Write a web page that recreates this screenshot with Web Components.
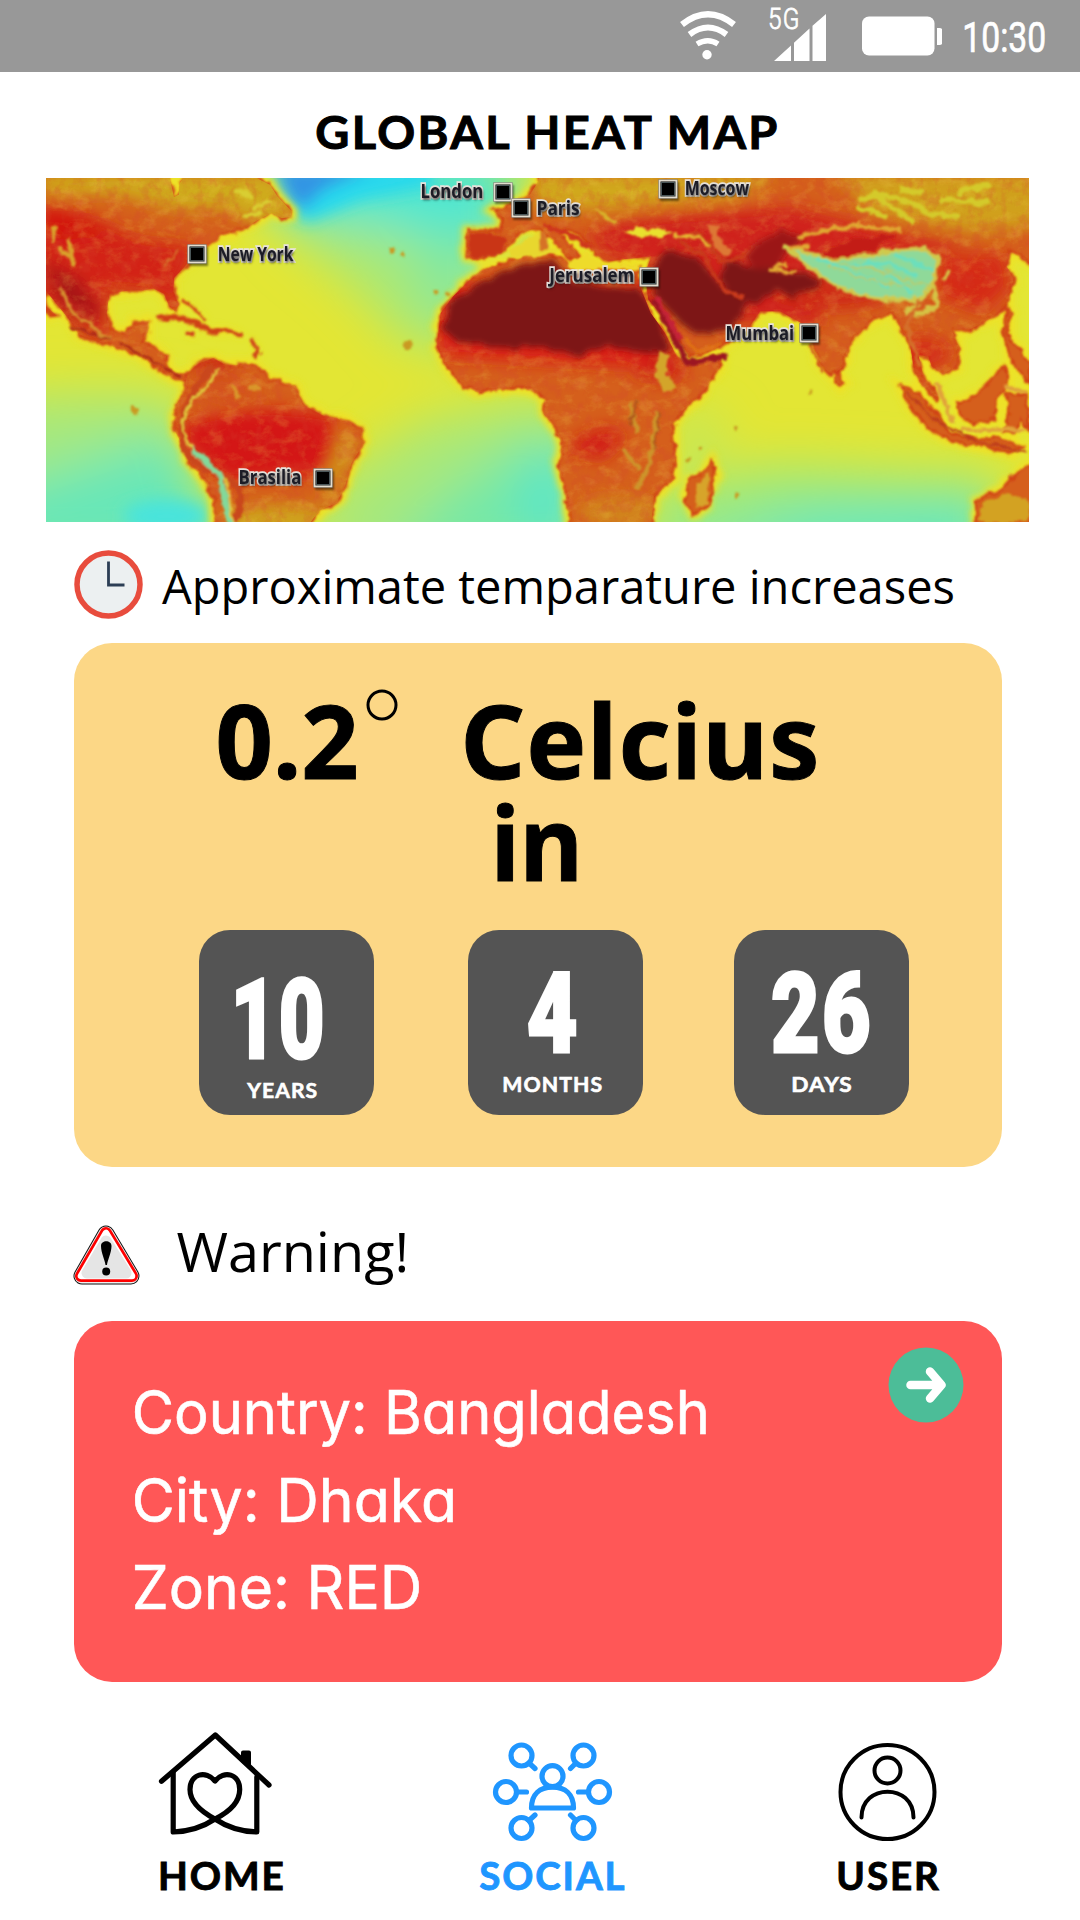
<!DOCTYPE html>
<html lang="en">
<head>
<meta charset="utf-8">
<title>Global Heat Map</title>
<style>
html,body{margin:0;padding:0;background:#fff}
body{width:1080px;height:1920px;overflow:hidden;font-family:Lato,sans-serif;color:#000}
</style>
</head>
<body>
<heat-app></heat-app>
<script>
const define = (name, html, after) => {
  const t = document.createElement('template');
  t.innerHTML = html;
  customElements.define(name, class extends HTMLElement {
    connectedCallback() {
      if (this.shadowRoot) return;
      this.attachShadow({mode: 'open'}).appendChild(t.content.cloneNode(true));
      if (after) after(this, this.shadowRoot);
    }
  });
};

/* Text fitted to a box: w is the ink width, h the capital height; the baseline is the bottom edge. */
const ctx = document.createElement('canvas').getContext('2d');
define('fit-text', `<style>
:host{display:block;flex:none;white-space:nowrap}
span{display:inline-block;transform-origin:0 0;white-space:pre}
div{height:100%;width:100%}
</style><div><span><slot></slot></span></div>`, (el, root) => {
  const w = +el.getAttribute('w'), h = +el.getAttribute('h');
  const fam = el.getAttribute('face') || 'Lato', wt = el.getAttribute('wt') || '800';
  const ls = +(el.getAttribute('ls') || 0);
  const s = root.querySelector('span');
  ctx.font = `${wt} 200px ${fam}, sans-serif`;
  const size = h / (ctx.measureText('H').actualBoundingBoxAscent / 200);
  el.style.width = w + 'px'; el.style.height = h + 'px';
  s.style.font = `${wt} ${size}px/${h}px ${fam}, sans-serif`;
  s.style.letterSpacing = ls * size + 'px';
  if (el.getAttribute('feat')) s.style.fontFeatureSettings = el.getAttribute('feat').split(' ').map(f => `"${f}"`).join(',');
  const m = ctx.measureText(el.textContent), k = size / 200;
  const left = -m.actualBoundingBoxLeft * k, right = (m.width - m.actualBoundingBoxRight) * k;
  const ink = s.getBoundingClientRect().width - left - right - ls * size;
  const sx = w / ink;
  const base = h / 2 + (m.fontBoundingBoxAscent - m.fontBoundingBoxDescent) * k / 2;
  s.style.transform = `translate(${-left * sx}px,${h - base}px) scaleX(${sx})`;
});

define('status-bar', `<style>
:host{display:flex;align-items:flex-start;height:72px;background:#989898;color:#fff;padding-left:680px;box-sizing:border-box}
svg{display:block;flex:none}
.sig{display:flex;margin:9px 0 0 33.500px}
.g5{-webkit-text-stroke:.8px #fff}
.bars{margin:5px 0 0 -23px}
.bat{margin:16px 0 0 35.500px}
.time{margin:21px 0 0 23.500px;-webkit-text-stroke:.7px #fff}
</style>
<svg width="56" height="62" viewBox="0 0 56 62" fill="none" stroke="#fff"><path d="M2 24.500Q28 4 54 24.500" stroke-width="6.200"/><path d="M9.500 34.500Q28 20.500 46.500 34.500" stroke-width="6"/><path d="M17 44Q28 37.500 38 44" stroke-width="5.500"/><circle cx="27" cy="54.800" r="4.700" fill="#fff" stroke="none"/></svg>
<div class="sig"><fit-text class="g5" w="27.500" h="21" face="Roboto" wt="300" ls=".05">5G</fit-text>
<svg class="bars" width="52" height="48" viewBox="0 0 52 48" fill="#fff"><path d="M0 47L17 31.500V47ZM20 47V28.700L35.500 14.500V47ZM38.500 47V11.800L52 0V47Z"/></svg></div>
<svg class="bat" width="80" height="40" viewBox="0 0 80 40" fill="#fff"><rect x="0" y="0.500" width="72.500" height="39" rx="7"/><path d="M75 12h2.500q3 0 3 3v11q0 3-3 3H75Z"/></svg>
<fit-text class="time" w="79.500" h="31" face="Roboto" wt="400">10:30</fit-text>`);

define('map-pin', `<style>
:host{display:block;position:absolute;color:#1c1c26}
i{position:absolute;box-sizing:border-box;width:19px;height:19px;border:2px solid #e2dccf;background:#000;box-shadow:inset 0 0 0 1.500px #4a5658,1px 2px 2px #0007;transform:translate(-9.500px,-9.500px)}
.label{position:absolute;-webkit-text-stroke:3.500px #e8e3dc;paint-order:stroke fill;text-shadow:1px 2px 3px #000a}
</style><i></i>`, (el, root) => {
  const [x, y, tx, ty, w] = el.getAttribute('at').split(',').map(Number);
  el.style.left = x + 'px'; el.style.top = y + 'px';
  const f = document.createElement('fit-text');
  f.className = 'label';
  f.setAttribute('w', w); f.setAttribute('h', 14.5); f.setAttribute('face', "'Open Sans'"); f.setAttribute('wt', '700');
  f.textContent = el.getAttribute('name');
  f.style.left = (tx - x) + 'px'; f.style.top = (ty - 15 - y) + 'px';
  root.appendChild(f);
});

define('heat-map', `<style>
:host{display:block;position:relative;width:983px;height:344px;margin:29px 0 0 46px}
svg{display:block;overflow:hidden}
</style>
<svg width="983" height="344" viewBox="18 235 2949 1032" preserveAspectRatio="none">
<defs>
<filter id="b80" x="-60%" y="-60%" width="220%" height="220%"><feGaussianBlur stdDeviation="75"/></filter>
<filter id="b30" x="-40%" y="-40%" width="180%" height="180%"><feGaussianBlur stdDeviation="24"/></filter>
<filter id="b12" x="-40%" y="-40%" width="180%" height="180%"><feTurbulence type="fractalNoise" baseFrequency=".03" numOctaves="3" result="n"/><feDisplacementMap in="SourceGraphic" in2="n" scale="30"/><feGaussianBlur stdDeviation="9"/></filter>
<filter id="r" x="-5%" y="-5%" width="110%" height="110%"><feTurbulence type="fractalNoise" baseFrequency=".035" numOctaves="3" seed="4" result="n"/><feDisplacementMap in="SourceGraphic" in2="n" scale="24" xChannelSelector="R" yChannelSelector="G"/><feGaussianBlur stdDeviation="3"/></filter>
<filter id="tx" x="0" y="0" width="100%" height="100%"><feTurbulence type="fractalNoise" baseFrequency=".02 .03" numOctaves="5" seed="9"/><feColorMatrix values="0 0 0 0 .86  0 0 0 0 .68  0 0 0 0 .08  3.200 0 0 0 -1.500"/></filter>
<filter id="td" x="0" y="0" width="100%" height="100%"><feTurbulence type="fractalNoise" baseFrequency=".03 .025" numOctaves="4" seed="21"/><feColorMatrix values="0 0 0 0 .66  0 0 0 0 .06  0 0 0 0 .03  0 3.400 0 0 -1.500"/></filter>
<path id="na" d="M0 220H385L395 262 402 292 416 285 420 250 440 220 650 235 690 255 712 290 755 335 752 352 725 356 695 340 655 360 610 388 545 405 515 430 460 472 430 505 402 535 400 575 416 615 405 634 388 620 372 582 340 566 310 572 270 572 208 582 200 640 212 690 255 698 285 665 330 662 322 700 300 728 345 742 378 770 382 806 410 822 445 828 450 842 400 838 350 805 290 762 220 740 120 710 84 655 40 600 18 575V620L50 648 30 650 0 620Z"/>
<path id="sa" d="M438 825L475 792 520 775 560 798 640 793 690 838 765 860 788 915 850 948 920 963 965 990 972 1030 935 1090 915 1160 890 1210 840 1230 795 1290H530L522 1200 500 1150 450 1090 424 1030 400 985 408 920 436 875Z"/>
<path id="af" d="M-185 545L-230 590-268 640-280 740-252 800-212 848-160 878-70 868-20 865 22 880 45 900 42 940 75 985 98 1040 85 1100 105 1170 122 1290H362L372 1190 432 1140 436 1060 425 985 460 930 520 880 572 795 574 770 480 790 440 770 405 700 362 640 330 560 325 500 240 510 170 500 122 512 105 480 60 465 -10 470 -70 487-140 510Z"/>
<path id="eu" d="M-188 392L-95 393-75 355-112 335-40 308 0 285 25 245 30 220H1520V500L1440 455 1430 500 1450 540 1430 620 1385 655 1318 690 1265 690 1290 750 1280 800 1240 822 1205 800 1195 770 1165 765 1180 830 1225 882 1218 900 1170 850 1150 800 1140 730 1115 690 1085 638 1040 655 965 720 940 800 905 830 875 800 850 735 810 668 750 635 690 635 650 695 580 735 480 775 462 745 410 660 355 600 345 520 365 470 290 478 235 485 205 470 185 440 120 390 90 400 150 470 120 480 60 410 10 385-30 400-75 450-150 478-190 470Z"/>
<g id="isl"><path d="M1110 860L1150 870 1210 930 1262 1000 1340 1018 1400 1012 1480 1040 1440 1060 1350 1040 1260 1025 1190 980 1140 920Z"/><path d="M1283 905L1320 900 1380 845 1420 800 1440 840 1400 900 1395 960 1330 972 1290 950Z"/><path d="M1425 880L1490 885 1500 990 1470 960 1450 1000 1420 1000 1440 940Z"/><path d="M1430 620L1445 640 1430 700 1500 790 1500 850 1440 780 1420 700Z"/><path d="M1335 1290L1342 1200 1420 1165 1460 1120 1510 1090V1290Z"/><path d="M545 1078L557 1120 530 1225 490 1245 466 1195 478 1140 515 1120Z"/><path d="M922 815L945 850 930 862 915 842Z"/></g>
<g id="carib" fill="none"><path d="M350 658Q400 640 450 665T505 690" stroke-width="16"/><path d="M440 703H460M500 696L560 692 605 706" stroke-width="14"/><path d="M425 600L460 625 500 662M635 715L652 745 640 775M665 765V770" stroke-width="10"/></g>
<clipPath id="land"><use href="#na"/><use href="#sa"/><use href="#af" x="1470"/><use href="#eu" x="1470"/></clipPath>
</defs>
<rect x="0" y="200" width="3000" height="1100" fill="#e3e634"/>
<g filter="url(#b80)">
<path d="M-200 900Q300 860 420 900L560 1400H-200Z" fill="#a6e87e"/><path d="M-200 1200L400 1000 600 1400H-200Z" fill="#68e7b8"/>
<path d="M600 200H1400V700Q1250 780 1080 720Q1000 600 780 430Z" fill="#a6e87a"/><path d="M680 150H1420V440L1180 420 1000 370 700 350Z" fill="#4be6d4"/>
<path d="M1130 400L1380 380 1280 560 1190 680Z" fill="#7be8a4"/>
<path d="M780 1400L860 1150 1150 960 1500 890 1700 1000V1400Z" fill="#a9e879"/><path d="M980 1400L1250 1160 1500 1000 1650 1050V1400Z" fill="#73e8a9"/><ellipse cx="1520" cy="1200" rx="50" ry="130" fill="#40e4da"/>
<path d="M1820 1400V1180L2200 1100 2880 1130V1400Z" fill="#99e984"/><path d="M1850 1400L2300 1240 2850 1210V1400Z" fill="#5de7c2"/><ellipse cx="1970" cy="1010" rx="80" ry="60" fill="#b0e870"/>
</g>
<g filter="url(#b30)"><ellipse cx="380" cy="1250" rx="130" ry="50" fill="#49e4dc"/><path d="M700 200H1180V260L960 300 800 370 760 330Z" fill="#25d8ee"/><path d="M700 200H1010L850 270 790 330 750 300Z" fill="#3094e4"/></g>
<g filter="url(#b12)" fill="#eee128" stroke="#eee128" stroke-width="32"><use href="#na"/><use href="#sa"/><use href="#af" x="1470"/><use href="#eu" x="1470"/><use href="#isl" x="1470"/><use href="#carib"/></g>
<g filter="url(#r)" fill="#d55f1b" stroke="#cf3f17" stroke-width="7"><use href="#na"/><use href="#sa"/><use href="#af" x="1470"/><use href="#eu" x="1470"/><use href="#isl" x="1470"/><use href="#carib"/></g>
<g clip-path="url(#land)">
<g filter="url(#b30)">
<path d="M0 220H700L780 350 640 370 560 330 400 330 250 290 0 280Z" fill="#cfab1c"/>
<path d="M0 310L130 340 300 420 470 440 430 520 400 640 350 570 200 560 190 720 100 660 0 600Z" fill="#d32016"/><path d="M0 480L120 540 190 640 150 670 60 610Z" fill="#a71614"/><path d="M0 320L130 350 200 410 60 420Z" fill="#d3150f"/>
<path d="M430 975Q620 900 870 950L890 1050 830 1130 560 1140 440 1040Z" fill="#d41814"/><ellipse cx="560" cy="870" rx="90" ry="45" fill="#d4551a"/><ellipse cx="720" cy="1265" rx="180" ry="50" fill="#cfa31c"/><path d="M900 1000L960 1030 880 1210 840 1180Z" fill="#d0921c"/><ellipse cx="520" cy="795" rx="60" ry="22" fill="#c91a17"/>
<path d="M1480 220H2220L2100 290 1700 330 1480 330Z" fill="#d0a81c"/><path d="M2380 220H3000V380L2800 400 2500 340Z" fill="#d0a01c"/>
<path d="M1640 400L1750 360 2000 340 2250 320 2450 370 2600 410 2800 430 2640 470 2350 460 2340 680 2050 660 1850 500 1700 470Z" fill="#d0241a"/>
<path d="M2700 470L2890 460 2910 560 2830 640 2690 590Z" fill="#d52c18"/><path d="M1180 560L1850 560 1910 810 1200 770Z" fill="#d81a14"/><path d="M1850 740L1940 800 1900 850 1780 830Z" fill="#d02018"/><path d="M1600 1020L1700 980 1760 1010 1690 1080 1600 1060Z" fill="#d21d16"/><ellipse cx="1740" cy="1240" rx="130" ry="50" fill="#d1841c"/><ellipse cx="2370" cy="580" rx="180" ry="50" fill="#cf2c18"/><ellipse cx="2640" cy="760" rx="90" ry="50" fill="#d42f18"/>
</g>
<rect x="0" y="220" width="3000" height="1060" filter="url(#tx)" opacity=".2"/>
<rect x="0" y="220" width="3000" height="1060" filter="url(#td)" opacity=".24"/>
<g filter="url(#b12)" fill="#7d1518">
<path d="M1300 555L1440 495 1540 478 1600 550 1800 570 1860 660 1885 745 1830 765 1700 735 1620 770 1500 745 1390 745 1250 725 1208 690 1225 620Z"/><path d="M1835 500L1875 455 1970 472 2045 560 2125 620 2085 680 1980 710 1920 670 1845 590Z"/>
<path d="M2050 480L2170 510 2300 520 2355 550 2260 600 2210 570 2150 610 2090 605 2040 540Z"/><path d="M2110 470L2150 430 2230 390 2300 420 2230 470 2220 510 2150 510Z" fill="#9b1416"/></g>
</g>
<g filter="url(#r)" fill="none">
<path d="M520 800Q440 880 425 980T530 1120 570 1290" stroke="#c9461c" stroke-width="20"/><path d="M535 810L500 860 455 905 425 975 450 1035 510 1100 560 1140 580 1290" stroke="#dfc63c" stroke-width="9"/><path d="M460 1050L540 1125 570 1290" stroke="#83d99a" stroke-width="18"/>
<path d="M60 565L100 640 210 720" stroke="#d58f2d" stroke-width="11"/><path d="M90 680L210 720M245 730L420 830" stroke="#a82819" stroke-width="7"/>
<path d="M45 380L40 430M85 420L100 500M60 450L90 470" stroke="#d9a32c" stroke-width="12"/><path d="M370 500L420 450" stroke="#d5702a" stroke-width="7"/>
<path d="M640 330L690 300M610 350L660 340M580 270L640 290" stroke="#d9ce30" stroke-width="13"/>
<path d="M575 855L600 900M625 860L660 865" stroke="#d9962c" stroke-width="11"/>
<path d="M1840 600L1885 680 1915 735 1940 790 2060 770" stroke="#9b1823" stroke-width="18"/><path d="M1850 590L1895 675 1920 720" stroke="#c42439" stroke-width="12"/>
<path d="M1935 715L1975 755 2040 735" stroke="#e07218" stroke-width="9"/>
<path d="M1875 760L1860 820 1890 870" stroke="#d3a52b" stroke-width="32"/><path d="M1770 910L1790 1000M1850 930L1830 1090 1790 1170M1750 1050L1800 1110" stroke="#cd942b" stroke-width="14"/><path d="M1790 900L1770 980M1860 930L1840 1050" stroke="#af551c" stroke-width="6"/>
<path d="M1920 425L1990 470 2060 580 2110 590M1965 400L2010 430 2040 485 2120 470" stroke="#c93b1a" stroke-width="11"/>
<path d="M1900 405L1970 410 2005 440" stroke="#e5b833" stroke-width="10"/>
<path d="M1510 375L1580 400 1660 450" stroke="#ce341a" stroke-width="15"/><path d="M1670 330L1725 365" stroke="#d8b52b" stroke-width="11"/>
</g>
<g filter="url(#r)">
<path d="M1410 450L1500 395 1500 450 1560 440 1540 465 1410 475Z" fill="#e8d72d"/><path d="M1580 495L1640 455 1690 495 1790 490 1800 510 1590 512Z" fill="#eedb2b"/><path d="M1510 400V450" stroke="#d67227" stroke-width="18"/>
<path d="M1755 405L1785 375 1820 395 1860 385 1895 400 1870 412Z" fill="#e9e12f"/><path d="M2000 375L2040 378 2030 410 2080 455 2050 470 2020 435Z" fill="#dd7834"/>
<path d="M1290 400L1360 400 1400 425 1380 460 1310 475 1285 450Z" fill="#c93518"/>
<path d="M2230 440L2320 465 2380 480 2480 470 2570 450 2650 445 2695 480 2680 550 2640 600 2550 600 2450 585 2370 550Z" fill="#8fd999" stroke="#d0c94c" stroke-width="12"/>
<path d="M2330 475L2460 530 2550 560M2420 500L2540 490 2630 530M2480 480L2620 580M2560 465L2680 510" fill="none" stroke="#6cdfbc" stroke-width="12"/>
<path d="M2370 500L2500 545 2620 560M2500 510L2670 560M2400 495L2560 515" fill="none" stroke="#b8cc6c" stroke-width="5"/>
<path d="M2350 460L2450 415 2570 405 2500 450 2390 475Z" fill="#c31a18"/>
<path d="M2270 415L2370 390 2450 375 2500 385 2580 390M2250 445L2310 440M2240 490L2190 510 2270 520" fill="none" stroke="#e0a832" stroke-width="12"/>
<path d="M2450 300L2500 290 2570 330 2620 370M2450 320L2540 350M2500 280L2620 310 2680 350M2650 280L2580 270M2750 280L2850 250M2700 300L2850 310M2640 340L2760 350" fill="none" stroke="#d4ca2c" stroke-width="17"/>
<path d="M2680 520L2690 620 2620 650M2730 510L2710 540M2640 610L2590 640" fill="none" stroke="#d5c245" stroke-width="15"/>
<path d="M2640 600L2600 680 2640 800" fill="none" stroke="#d4702a" stroke-width="12"/><path d="M2350 820L2310 735" stroke="#cf4b1d" stroke-width="7"/>
<path d="M2690 850L2740 970M2760 990L2960 990M2890 860L2960 880" stroke="#e1a23b" stroke-width="13" fill="none"/>
<path d="M2600 880L2700 970 2820 1030 2960 1055" stroke="#bb3b1c" stroke-width="7" fill="none"/>
<path d="M2815 1267L2830 1210 2900 1180 2967 1200V1267Z" fill="#d3a223"/><path d="M1970 1150L2010 1120 2000 1210 1965 1225Z" fill="#d7a42a"/>
<g fill="#c99a24"><circle cx="283" cy="935" r="11"/><circle cx="1055" cy="453" r="9"/><circle cx="1085" cy="465" r="7"/><circle cx="1105" cy="735" r="11"/><circle cx="1185" cy="578" r="7"/><circle cx="1225" cy="580" r="7"/><circle cx="2088" cy="988" r="6"/><circle cx="2312" cy="878" r="6"/><circle cx="1945" cy="1080" r="9"/><circle cx="1980" cy="1045" r="7"/><circle cx="2090" cy="1190" r="7"/></g>
</g>
</svg>
<map-pin at="151.000,76,173,82.700,74.500" name="New York"></map-pin>
<map-pin at="456.700,14,376,20,60" name="London"></map-pin>
<map-pin at="474.700,30,492,37,41" name="Paris"></map-pin>
<map-pin at="622.300,10.700,640,17,63" name="Moscow"></map-pin>
<map-pin at="603.300,99,502,104.300,85" name="Jerusalem"></map-pin>
<map-pin at="762.700,154.500,681,161.700,66" name="Mumbai"></map-pin>
<map-pin at="277.300,299.500,194,306.300,60" name="Brasilia"></map-pin>`);

define('time-tile', `<style>
:host{display:flex;flex-direction:column;box-sizing:border-box;width:175px;height:185px;border-radius:31px;background:#545454;color:#fff}
</style><slot></slot>`);

define('forecast-card', `<style>
:host{display:block;box-sizing:border-box;width:928px;height:524px;margin:23.500px 0 0 73.500px;border-radius:38px;background:#fcd786;padding-top:63.500px}
.line{display:flex;height:74px;padding-left:145px}
.line svg{display:block;margin:-17px 67.500px 0 11px;flex:none}
.in{margin:28px 0 0 423px}
.big{-webkit-text-stroke:1px #000}
.tiles{display:flex;margin:48px 0 0 125px}
.n{-webkit-text-stroke:3px #fff}
.u{-webkit-text-stroke:.6px #fff}
time-tile:nth-child(2){margin-left:94px}time-tile:nth-child(3){margin-left:91.500px}
</style>
<div class="line"><fit-text class="big" w="136.500" h="73" face="'Noto Sans'" wt="700">0.2</fit-text><svg width="32" height="32" viewBox="0 0 32 32"><circle cx="16" cy="16" r="14" fill="none" stroke="#000" stroke-width="3"/></svg><fit-text class="big" w="349.500" h="73" face="'Noto Sans'" wt="700" ls=".01" style="margin-left:.5px">Celcius</fit-text></div>
<fit-text class="in big" w="79" h="73.500" face="'Noto Sans'" wt="700">in</fit-text>
<div class="tiles">
<time-tile><fit-text class="n" style="margin:48px 0 0 38.500px" w="84.500" h="80" face="Roboto" wt="900" ls=".03">10</fit-text><fit-text class="u" style="margin:24px 0 0 48px" w="69.500" h="15" wt="700" ls=".05">YEARS</fit-text></time-tile>
<time-tile><fit-text class="n" style="margin:42px 0 0 61.500px" w="46.500" h="80" face="Roboto" wt="900">4</fit-text><fit-text class="u" style="margin:24px 0 0 36.500px" w="97.500" h="15" wt="700" ls=".05">MONTHS</fit-text></time-tile>
<time-tile><fit-text class="n" style="margin:42px 0 0 39px" w="95.500" h="80" face="Roboto" wt="900" ls=".03">26</fit-text><fit-text class="u" style="margin:24px 0 0 59px" w="58" h="15" wt="700" ls=".05">DAYS</fit-text></time-tile>
</div>`);

define('warning-card', `<style>
:host{display:block;position:relative;box-sizing:border-box;width:928px;height:361px;margin:36.500px 0 0 73.500px;border-radius:38px;background:#ff5757;color:#fff;padding:70px 0 0 61px;-webkit-text-stroke:.6px #fff}
svg{position:absolute;left:814px;top:25.500px}
fit-text+fit-text{margin-top:42.500px}
</style>
<fit-text w="570.500" h="44" face="Inter" wt="400" feat="cv11">Country: Bangladesh</fit-text>
<fit-text w="317.500" h="44.500" face="Inter" wt="400" feat="cv11">City: Dhaka</fit-text>
<fit-text w="284" h="44.500" face="Inter" wt="400" feat="cv11">Zone: RED</fit-text>
<svg width="76" height="76" viewBox="0 0 76 76"><circle cx="38" cy="38" r="37.500" fill="#4cbd98"/><path d="M22.500 38H52M42 24.500L53.500 38 42 51.500" fill="none" stroke="#fff" stroke-width="8.500" stroke-linecap="round" stroke-linejoin="round"/></svg>`);

define('section-row', `<style>
:host{display:flex;align-items:flex-start;box-sizing:border-box}
::slotted(svg){display:block;flex:none}
</style><slot></slot>`);

define('nav-item', `<style>
:host{display:flex;flex-direction:column;flex:none}
::slotted(svg){display:block;height:110px;overflow:visible}
::slotted(fit-text){margin-top:21.500px}
</style><slot></slot>`);

define('nav-bar', `<style>
:host{display:flex;align-items:flex-start;height:190px;margin-top:48px;padding-left:157.500px;box-sizing:border-box}
.s{margin-left:198px;color:#1f96ff}.u{margin-left:213px}
</style>
<nav-item><svg width="124" height="110" viewBox="0 0 124 110" fill="none" stroke="#000" stroke-width="5.200" stroke-linecap="round" stroke-linejoin="round"><path d="M3.500 51.300L57.300 5 111 55"/><path d="M85 22.500H91V36L85 31Z" fill="#000" stroke-width="4"/><path d="M15.200 42V102C29 101.500 45 97 57 89C73 81 81.700 71 81.700 59.500C81.700 43.500 66 40 57 51C48 40 32 43.500 32 59.500C32 71 42 81 57 89C69 97 81 101.500 98.800 102V47"/></svg><fit-text w="121.500" h="28" wt="700" ls=".05" style="margin-left:3px;-webkit-text-stroke:.9px #000">HOME</fit-text></nav-item>
<nav-item class="s"><svg width="145" height="110" viewBox="0 0 145 110" fill="none" stroke="#1f96ff" stroke-width="5.200" stroke-linecap="round" stroke-linejoin="round"><circle cx="41.500" cy="25.500" r="10.500"/><circle cx="103.500" cy="25.500" r="10.500"/><circle cx="26" cy="62" r="10.500"/><circle cx="119" cy="62" r="10.500"/><circle cx="41.500" cy="98" r="10.500"/><circle cx="103.500" cy="98" r="10.500"/><circle cx="72.500" cy="46.200" r="10.500"/><path d="M51.500 78C51.500 64 60 57.200 72.500 57.200S93.500 64 93.500 78ZM49 33L55 38.500M96 33L90.500 38.500M37 62H46.500M108 62H98.500M49 90.500L55 85M96 90.500L90.500 85"/></svg><fit-text w="144" h="28" wt="700" ls=".05" style="-webkit-text-stroke:.9px #1f96ff">SOCIAL</fit-text></nav-item>
<nav-item class="u"><svg width="100" height="110" viewBox="0 0 100 110" fill="none" stroke="#000" stroke-width="4" stroke-linecap="round"><circle cx="49.500" cy="62" r="47"/><circle cx="49.500" cy="40.500" r="13"/><path d="M23.500 87.500C23.500 53 75.500 53 75.500 87.500"/></svg><fit-text w="100" h="28" wt="700" ls=".05" style="margin-left:.5px;-webkit-text-stroke:.9px #000">USER</fit-text></nav-item>`);

define('heat-app', `<style>
:host{display:flex;flex-direction:column;width:1080px;height:1920px;background:#fff;overflow:hidden}
.title{margin:43.500px 0 0 316.500px;-webkit-text-stroke:1px #000}
.approx{height:69px;margin:28px 0 0 73.500px}
.warn{height:60px;margin:58px 0 0 72.500px}
</style>
<status-bar></status-bar>
<fit-text class="title" w="459.500" h="33.500" wt="700" ls=".05">GLOBAL HEAT MAP</fit-text>
<heat-map></heat-map>
<section-row class="approx"><svg width="69" height="69" viewBox="0 0 69 69"><circle cx="34.500" cy="34.500" r="31.500" fill="#ecf0f1" stroke="#e84c3d" stroke-width="5.500"/><path d="M34.500 11.500V35H50.500" fill="none" stroke="#2c3e55" stroke-width="2.800"/></svg><fit-text style="margin:19.500px 0 0 19px" w="791" h="34" face="'Open Sans'" wt="400">Approximate temparature increases</fit-text></section-row>
<forecast-card></forecast-card>
<section-row class="warn"><svg width="67" height="60" viewBox="0 0 67 60" stroke-linejoin="round"><path d="M33 9L9 51H58Z" fill="#000" stroke="#111" stroke-width="17"/><path d="M33 9L9 51H58Z" fill="#fff" stroke="#eee" stroke-width="15"/><path d="M33 8L8 51H59Z" fill="#fff" stroke="red" stroke-width="12"/><path d="M33 8L8 51H59Z" fill="#fff" stroke="#fff" stroke-width="6.500"/><path d="M33 16L14 48H53Z" fill="#e5e5e5" stroke="#e5e5e5" stroke-width="11"/><path d="M28 21C28 14.800 38.500 14.800 38.500 21C38.500 28 34.500 35 34 40H32.500C32 35 28 28 28 21Z"/><circle cx="33.200" cy="46.500" r="4"/></svg><fit-text style="margin:8px 0 0 37.500px" w="228" h="39.500" face="'Open Sans'" wt="400">Warning!</fit-text></section-row>
<warning-card></warning-card>
<nav-bar></nav-bar>`);
</script>
</body>
</html>
